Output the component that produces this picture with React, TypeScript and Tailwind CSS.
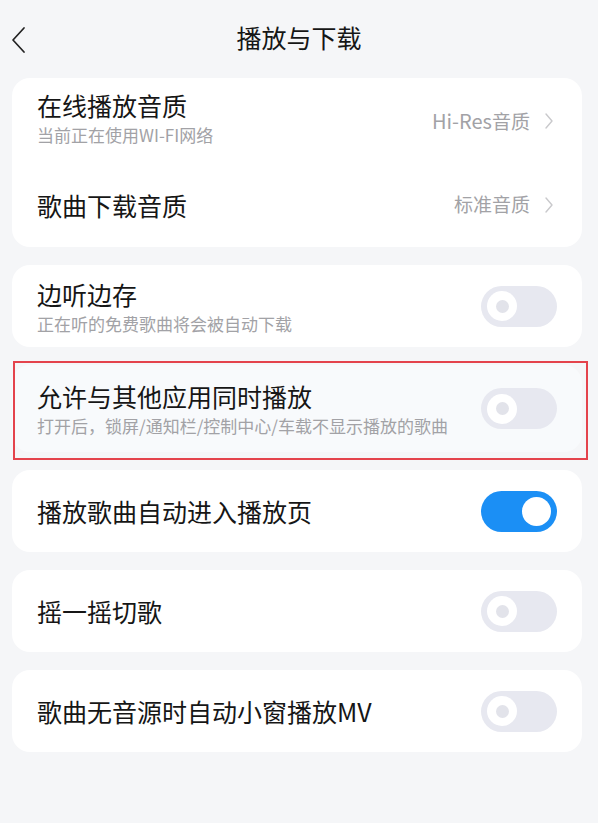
import React from "react";

const font = { fontFamily: '"Noto Sans CJK SC", "Noto Sans", sans-serif' };

function Toggle({ on }: { on?: boolean }) {
  if (on) {
    return (
      <div className="w-[76px] h-[41px] rounded-full bg-[#1b8ff5] flex items-center justify-end pr-[6px] shrink-0">
        <div className="w-[29px] h-[29px] rounded-full bg-white" />
      </div>
    );
  }
  return (
    <div className="w-[76px] h-[41px] rounded-full bg-[#e7e8f0] flex items-center pl-[6px] shrink-0">
      <div className="w-[30px] h-[30px] rounded-full bg-white flex items-center justify-center">
        <div className="w-[13px] h-[13px] rounded-full bg-[#e2e3ea]" />
      </div>
    </div>
  );
}

function Chevron() {
  return (
    <svg width="10" height="18" viewBox="0 0 10 18" className="ml-[14px]">
      <polyline points="2,2 8,9 2,16" fill="none" stroke="#c9c9cc" strokeWidth="1.4" strokeLinecap="round" strokeLinejoin="round" />
    </svg>
  );
}

function Texts({ title, sub }: { title: string; sub?: string }) {
  return (
    <div className="flex flex-col">
      <div className="text-[25px] leading-[30px] text-[#161616]">{title}</div>
      {sub && <div className="text-[17px] leading-[20px] mt-[5px] text-[#a2a2a6]">{sub}</div>}
    </div>
  );
}

function ToggleCard({ title, sub, on, tint }: { title: string; sub?: string; on?: boolean; tint?: boolean }) {
  return (
    <div className={`h-[82px] rounded-[18px] ${tint ? "bg-[#f8fafc]" : "bg-white"} flex items-center justify-between pl-[25px] pr-[25px]`}>
      <Texts title={title} sub={sub} />
      <Toggle on={on} />
    </div>
  );
}

export default function App() {
  return (
    <div className="w-[598px] h-[823px] bg-[#f5f6f8] overflow-hidden" style={font}>
      <div className="h-[78px] relative flex items-start justify-center">
        <svg width="20" height="28" viewBox="0 0 20 28" className="absolute left-[9px] top-[26px]">
          <polyline points="15,2 4,14 15,26" fill="none" stroke="#222" strokeWidth="1.7" strokeLinecap="round" strokeLinejoin="round" />
        </svg>
        <div className="text-[25px] leading-[30px] text-[#161616] mt-[22px]">播放与下载</div>
      </div>
      <div className="ml-[12px] w-[570px] flex flex-col gap-[18px]">
        <div className="rounded-[18px] bg-white flex flex-col">
          <div className="h-[84px] flex items-center justify-between pl-[25px] pr-[28px] pb-[6px]">
            <Texts title="在线播放音质" sub="当前正在使用WI-FI网络" />
            <div className="flex items-center text-[19px] text-[#a2a2a6] mt-[8px]">
              <span>
                <span className="text-[20px]">Hi-Res</span>音质
              </span>
              <Chevron />
            </div>
          </div>
          <div className="h-[85px] flex items-center justify-between pl-[25px] pr-[28px]">
            <Texts title="歌曲下载音质" />
            <div className="flex items-center text-[19px] text-[#a2a2a6]">
              <span>标准音质</span>
              <Chevron />
            </div>
          </div>
        </div>
        <ToggleCard title="边听边存" sub="正在听的免费歌曲将会被自动下载" />
        <div className="relative">
          <div className="h-[87px] rounded-[18px] bg-[#f8fafc] flex items-center justify-between pl-[25px] pr-[25px]">
            <Texts title="允许与其他应用同时播放" sub="打开后，锁屏/通知栏/控制中心/车载不显示播放的歌曲" />
            <Toggle />
          </div>
          <div className="absolute left-[1px] top-[-4px] w-[575px] h-[99px] border-2 border-[#e4434c] pointer-events-none" />
        </div>
        <ToggleCard title="播放歌曲自动进入播放页" on />
        <ToggleCard title="摇一摇切歌" />
        <ToggleCard title="歌曲无音源时自动小窗播放MV" />
      </div>
    </div>
  );
}
